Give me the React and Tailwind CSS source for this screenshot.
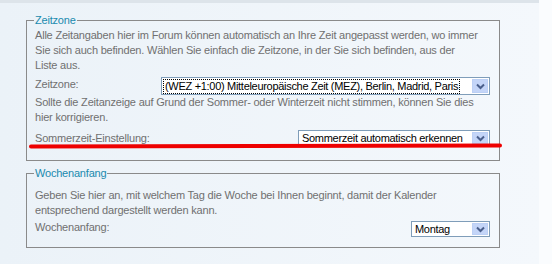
import React from "react";

function Arrow() {
  return (
    <div className="flex h-full w-[16px] shrink-0 items-center justify-center border border-[#bcd0f5] bg-[#c4d5f8]">
      <svg width="9" height="7" viewBox="0 0 9 7">
        <path d="M1 1.5 L4.5 5 L8 1.5" fill="none" stroke="#4a5f8c" strokeWidth="2" />
      </svg>
    </div>
  );
}

function Select({ width, text, focus, height }) {
  return (
    <div
      className={`flex items-stretch border border-[#7f9db9] bg-white p-[1px] ${width} ${height}`}
    >
      <div className="flex min-w-0 flex-1 items-center pl-[1px]">
        <span
          className={`whitespace-nowrap px-[1px] leading-[13px] tracking-[-0.3px] text-black ${
            focus ? "outline outline-1 outline-dotted outline-black" : ""
          }`}
        >
          {text}
        </span>
      </div>
      <Arrow />
    </div>
  );
}

export default function App() {
  return (
    <div
      className="relative flex h-[264px] w-[552px] overflow-hidden whitespace-nowrap text-[11px] tracking-[-0.2px] text-[#707070]"
      style={{ fontFamily: '"Liberation Sans", Arial, sans-serif' }}
    >
      <div className="flex w-[539px] flex-col bg-gradient-to-r from-[#ebf2f8] to-[#f4f8fc]">
        <div className="h-[3px] bg-[#dde4ea]" />
        <div className="flex flex-col pl-[26px] pt-[11px]">
          <fieldset className="w-[474px] border border-[#8a8a8a] pb-[14px] pl-[8px] pr-[9px]">
            <legend className="-ml-[1px] px-[1px] text-[11px] leading-[13px] text-[#1a8aae]">
              Zeitzone
            </legend>
            <div className="pt-[1px] leading-[15px]">
              Alle Zeitangaben hier im Forum können automatisch an Ihre Zeit angepasst werden, wo immer
              <br />
              Sie sich auch befinden. Wählen Sie einfach die Zeitzone, in der Sie sich befinden, aus der
              <br />
              Liste aus.
            </div>
            <div className="mt-[4px] flex h-[18px] items-center justify-between">
              <span className="-mt-[3px]">Zeitzone:</span>
              <Select
                width="w-[329px]"
                height="h-[18px]"
                text="(WEZ +1:00) Mitteleuropäische Zeit (MEZ), Berlin, Madrid, Paris"
                focus
              />
            </div>
            <div className="leading-[15px]">
              Sollte die Zeitanzeige auf Grund der Sommer- oder Winterzeit nicht stimmen, können Sie dies
              <br />
              hier korrigieren.
            </div>
            <div className="mt-[5px] flex h-[16px] items-center justify-between">
              <span>Sommerzeit-Einstellung:</span>
              <Select width="w-[192px]" height="h-[16px]" text="Sommerzeit automatisch erkennen" />
            </div>
          </fieldset>
          <fieldset className="mt-[6px] w-[474px] border border-[#8a8a8a] pb-[10px] pl-[8px] pr-[9px]">
            <legend className="-ml-[1px] px-[1px] text-[11px] leading-[13px] text-[#1a8aae]">
              Wochenanfang
            </legend>
            <div className="pt-[8px] leading-[15px]">
              Geben Sie hier an, mit welchem Tag die Woche bei Ihnen beginnt, damit der Kalender
              <br />
              entsprechend dargestellt werden kann.
            </div>
            <div className="mt-[3px] flex h-[16px] items-center justify-between">
              <span className="-mt-[4px]">Wochenanfang:</span>
              <Select width="w-[79px]" height="h-[16px]" text="Montag" />
            </div>
          </fieldset>
        </div>
      </div>
      <div className="flex-1 bg-[#fafcfe]" />
      <svg className="absolute left-0 top-0" width="552" height="264">
        <line
          x1="31"
          y1="146.5"
          x2="500"
          y2="145.5"
          stroke="#ee0000"
          strokeWidth="4"
          strokeLinecap="round"
        />
      </svg>
    </div>
  );
}
